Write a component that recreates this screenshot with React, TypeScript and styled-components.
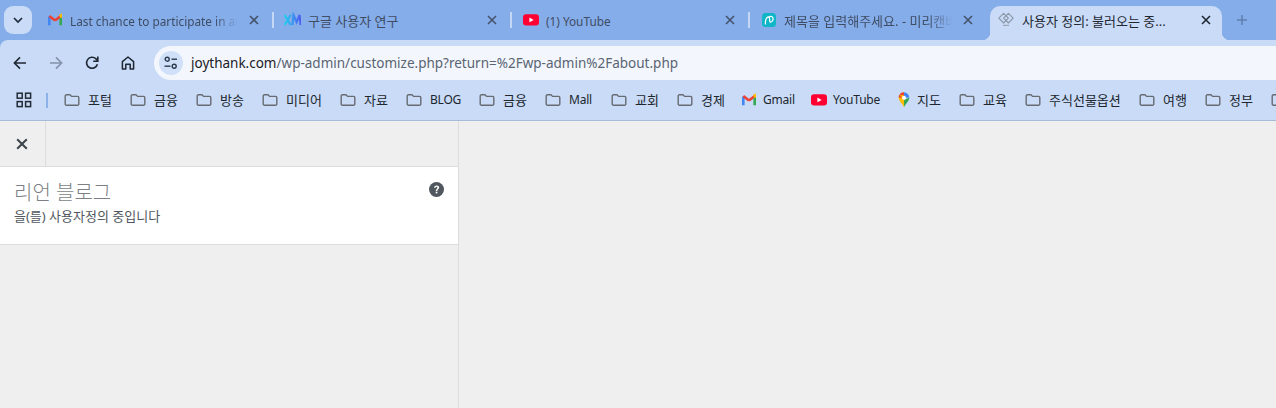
import React from "react";
import styled, { createGlobalStyle } from "styled-components";

const FONT = `"Noto Sans", "Noto Sans CJK KR", sans-serif`;

const GlobalStyle = createGlobalStyle`
  html, body { margin: 0; padding: 0; height: 100%; background: #efefef; overflow: hidden; }
  body { font-family: ${FONT}; }
  #root { height: 100%; }
`;

function GmailIcon({ size = 14 }: { size?: number }) {
  return (
    <svg width={size} height={size} viewBox="0 0 16 16" fill="none">
      <path d="M1.5 14V4.2" stroke="#4285f4" strokeWidth="3" />
      <path d="M14.5 14V4.2" stroke="#34a853" strokeWidth="3" />
      <path d="M1.5 3.5L8 8.6" stroke="#ea4335" strokeWidth="3" />
      <path d="M8 8.6L14.5 3.5" stroke="#ea4335" strokeWidth="3" />
      <path d="M13 3.2L15 2.4V5.5" stroke="#fbbc04" strokeWidth="2.4" />
    </svg>
  );
}

function YoutubeIcon() {
  return (
    <svg width="16" height="16" viewBox="0 0 16 16">
      <rect x="0" y="2.2" width="16" height="11.4" rx="3" fill="#ff0033" />
      <path d="M6.4 5.6L10.6 7.9L6.4 10.2Z" fill="#fff" />
    </svg>
  );
}

function XmIcon() {
  return (
    <XmSvg width="17" height="16" viewBox="0 0 17 16" fill="none">
      <defs>
        <linearGradient id="xm" x1="0" x2="1" y1="0" y2="0">
          <stop offset="0" stopColor="#22d0ee" />
          <stop offset="1" stopColor="#4f5cf0" />
        </linearGradient>
      </defs>
      <path d="M0.6 3L6.6 13M6.6 3L0.6 13M8.4 13L9.4 3L12.6 10L15.6 3L16.6 13" stroke="url(#xm)" strokeWidth="2.2" />
    </XmSvg>
  );
}

function CanvasIcon() {
  return (
    <svg width="14" height="16" viewBox="0 0 14 16" fill="none">
      <rect x="0" y="1" width="14" height="14" rx="3.5" fill="#10b6c6" />
      <path d="M3.4 12C3 8 4.8 4.6 6.8 5C8.4 5.4 7 10.4 8.6 10.2C10.4 10 11.6 7.6 10.9 5.6C10.2 3.8 7.8 4 6.6 5.4" stroke="#fff" strokeWidth="1.2" strokeLinecap="round" />
    </svg>
  );
}

function DiamondIcon() {
  return (
    <svg width="16" height="16" viewBox="0 0 16 16" fill="none">
      <path d="M5.6 1.4L10.4 6.2L5.6 11L0.8 6.2Z" stroke="#8b97a8" strokeWidth="1.1" strokeLinejoin="round" />
      <path d="M10.4 1.4L15.2 6.2L10.4 11L5.6 6.2Z" stroke="#8b97a8" strokeWidth="1.1" strokeLinejoin="round" />
      <path d="M5 13.4H11" stroke="#9aa6b8" strokeWidth="1.2" />
    </svg>
  );
}

function MapsIcon() {
  return (
    <svg width="14" height="16" viewBox="0 0 14 18">
      <path d="M7 17.5C6 14 1 10.5 1 6.3A6 6 0 0 1 7 .4V17.5Z" fill="#fbbc04" />
      <path d="M7 17.5C8 14 13 10.5 13 6.3L7 9Z" fill="#34a853" />
      <path d="M1.8 3.2A6 6 0 0 1 7 .4L7 4Z" fill="#ea4335" />
      <path d="M7 .4A6 6 0 0 1 13 6.3L9 6.5L7 4Z" fill="#4285f4" />
      <path d="M1 6.3A6 6 0 0 1 1.8 3.2L5 6.6Z" fill="#ea4335" />
      <circle cx="7" cy="6.4" r="2.2" fill="#fff" />
    </svg>
  );
}

function FolderIcon() {
  return (
    <svg width="16" height="16" viewBox="0 0 16 16" fill="none">
      <path
        d="M1.2 4A1.2 1.2 0 0 1 2.4 2.8H6L7.6 4.4H13.6A1.2 1.2 0 0 1 14.8 5.6V12A1.2 1.2 0 0 1 13.6 13.2H2.4A1.2 1.2 0 0 1 1.2 12Z"
        stroke="#676b72"
        strokeWidth="1.4"
      />
    </svg>
  );
}

function CloseIcon({ color = "#44505f" }: { color?: string }) {
  return (
    <CloseSvg width="10" height="10" viewBox="0 0 10 10" fill="none">
      <path d="M1 1L9 9M9 1L1 9" stroke={color} strokeWidth="1.6" />
    </CloseSvg>
  );
}

const KO = 13;
const EN = 11.8;

const tabs = [
  { title: "Last chance to participate in an exclusive", icon: <GmailIcon />, fade: true, size: EN },
  { title: "구글 사용자 연구", icon: <XmIcon />, fade: false, size: KO },
  { title: "(1) YouTube", icon: <YoutubeIcon />, fade: false, size: EN },
  { title: "제목을 입력해주세요. - 미리캔버스", icon: <CanvasIcon />, fade: true, size: KO },
];

const bookmarks: { label: string; icon?: React.ReactNode; gap?: number; width: number; latin?: boolean }[] = [
  { label: "포털", width: 26 },
  { label: "금융", width: 26 },
  { label: "방송", width: 26 },
  { label: "미디어", width: 38 },
  { label: "자료", width: 26 },
  { label: "BLOG", width: 33, latin: true },
  { label: "금융", width: 26 },
  { label: "Mall", width: 26, latin: true },
  { label: "교회", width: 26 },
  { label: "경제", width: 25 },
  { label: "Gmail", icon: <GmailIcon />, gap: 7, width: 32, latin: true },
  { label: "YouTube", icon: <YoutubeIcon />, gap: 6, width: 48, latin: true },
  { label: "지도", icon: <MapsIcon />, gap: 6, width: 26 },
  { label: "교육", width: 26 },
  { label: "주식선물옵션", width: 74 },
  { label: "여행", width: 26 },
  { label: "정부", width: 26 },
  { label: "", width: 0 },
];

export default function App() {
  return (
    <>
      <GlobalStyle />
      <Page>
        <TabStrip>
          <SearchTabs>
            <svg width="10" height="7" viewBox="0 0 10 7" fill="none">
              <path d="M1 1L5 5L9 1" stroke="#1f2a3a" strokeWidth="1.7" />
            </svg>
          </SearchTabs>
          {tabs.map((tab, i) => (
            <React.Fragment key={tab.title}>
              <Tab>
                <Favicon>{tab.icon}</Favicon>
                <TabTitle $fade={tab.fade} $size={tab.size}>{tab.title}</TabTitle>
                <CloseIcon color="#45536a" />
              </Tab>
              {i < tabs.length - 1 && <TabDivider />}
            </React.Fragment>
          ))}
          <ActiveTab>
            <Favicon>
              <DiamondIcon />
            </Favicon>
            <ActiveTitle>사용자 정의: 불러오는 중...</ActiveTitle>
            <CloseIcon color="#1f2733" />
          </ActiveTab>
          <NewTab>
            <svg width="12" height="12" viewBox="0 0 12 12" fill="none">
              <path d="M6 1V11M1 6H11" stroke="#5f7fb0" strokeWidth="1.5" />
            </svg>
          </NewTab>
        </TabStrip>

        <Toolbar>
          <NavButton>
            <svg width="16" height="16" viewBox="0 0 16 16" fill="none">
              <path d="M14 8H2.6M8 2.4L2.4 8L8 13.6" stroke="#1f2733" strokeWidth="1.6" />
            </svg>
          </NavButton>
          <NavButton>
            <svg width="16" height="16" viewBox="0 0 16 16" fill="none">
              <path d="M2 8H13.4M8 2.4L13.6 8L8 13.6" stroke="#8292aa" strokeWidth="1.6" />
            </svg>
          </NavButton>
          <NavButton>
            <svg width="16" height="16" viewBox="0 0 16 16" fill="none">
              <path d="M13.4 9.2A5.5 5.5 0 1 1 12 3.9L13.6 5.6" stroke="#1f2733" strokeWidth="1.6" />
              <path d="M13.8 1.6V6.2H9.2" stroke="#1f2733" strokeWidth="1.6" />
            </svg>
          </NavButton>
          <NavButton>
            <svg width="16" height="16" viewBox="0 0 16 16" fill="none">
              <path d="M2.4 14V6.6L8 2L13.6 6.6V14H10.2V9.2H5.8V14Z" stroke="#1f2733" strokeWidth="1.5" strokeLinejoin="round" />
            </svg>
          </NavButton>
          <Omnibox>
            <SiteInfo>
              <svg width="14" height="14" viewBox="0 0 14 14" fill="none">
                <path d="M0.5 10.2H6.5" stroke="#2c3a4e" strokeWidth="1.4" />
                <circle cx="10.2" cy="10.2" r="2" stroke="#2c3a4e" strokeWidth="1.4" />
                <circle cx="3.2" cy="3.2" r="2" stroke="#2c3a4e" strokeWidth="1.4" fill="#cfe0f8" />
                <path d="M7.5 3.2H13" stroke="#2c3a4e" strokeWidth="1.4" />
              </svg>
            </SiteInfo>
            <Url>
              <Host>joythank.com</Host>/wp-admin/customize.php?return=%2Fwp-admin%2Fabout.php
            </Url>
          </Omnibox>
        </Toolbar>

        <BookmarkBar>
          <AppsButton>
            <svg width="16" height="16" viewBox="0 0 16 16" fill="none" stroke="#222a36" strokeWidth="1.5">
              <rect x="1.2" y="1.2" width="5" height="5" />
              <rect x="9.6" y="1.2" width="5" height="5" />
              <rect x="1.2" y="9.6" width="5" height="5" />
              <rect x="9.6" y="9.6" width="5" height="5" />
            </svg>
          </AppsButton>
          <BarDivider />
          <BookmarkList>
            {bookmarks.map((b, i) => (
              <Bookmark key={i} $gap={b.gap ?? 8}>
                {b.icon ?? <FolderIcon />}
                <BookmarkLabel $width={b.width} $latin={!!b.latin}>{b.label}</BookmarkLabel>
              </Bookmark>
            ))}
          </BookmarkList>
        </BookmarkBar>

        <Content>
          <Sidebar>
            <SidebarHeader>
              <CustomizeClose>
                <svg width="12" height="12" viewBox="0 0 12 12" fill="none">
                  <path d="M1.2 1.2L10.8 10.8M10.8 1.2L1.2 10.8" stroke="#3c434a" strokeWidth="2" />
                </svg>
              </CustomizeClose>
            </SidebarHeader>
            <InfoPanel>
              <InfoText>
                <SiteTitle>리언 블로그</SiteTitle>
                <Action>을(를) 사용자정의 중입니다</Action>
              </InfoText>
              <HelpIcon>
                <svg width="15" height="15" viewBox="0 0 15 15">
                  <circle cx="7.5" cy="7.5" r="7.5" fill="#50575e" />
                  <path d="M5 5.8C5 4.3 6.1 3.4 7.6 3.4C9.1 3.4 10.2 4.2 10.2 5.6C10.2 7.2 8.3 7.3 8.3 8.9H6.8C6.8 6.8 8.4 6.8 8.4 5.7C8.4 5.1 8 4.8 7.5 4.8C6.9 4.8 6.6 5.2 6.6 5.8Z" fill="#fff" />
                  <rect x="6.7" y="9.7" width="1.7" height="1.7" fill="#fff" />
                </svg>
              </HelpIcon>
            </InfoPanel>
          </Sidebar>
        </Content>
      </Page>
    </>
  );
}

const XmSvg = styled.svg`
  flex: none;
  margin: -1px 0 0 -1px;
`;

const CloseSvg = styled.svg`
  flex: none;
`;

const Page = styled.div`
  display: flex;
  flex-direction: column;
  height: 408px;
  width: 1276px;
  overflow: hidden;
  background: #85adea;
`;

const TabStrip = styled.div`
  display: flex;
  align-items: stretch;
  height: 40px;
  padding-left: 4px;
  flex: none;
`;

const SearchTabs = styled.div`
  display: flex;
  align-items: center;
  justify-content: center;
  width: 28px;
  height: 28px;
  margin: 6px 4px 0 0;
  border-radius: 9px;
  background: #c9dbf6;
`;

const Tab = styled.div`
  display: flex;
  align-items: center;
  width: 236px;
  padding: 0 13px 0 11px;
  box-sizing: border-box;
  color: #3f4c63;
`;

const TabDivider = styled.div`
  align-self: center;
  width: 2px;
  height: 16px;
  background: #c5d7f5;
`;

const Favicon = styled.div`
  display: flex;
  align-items: center;
  justify-content: center;
  flex: none;
  width: 16px;
  height: 16px;
  margin-right: 7px;
`;

const TabTitle = styled.div<{ $fade: boolean; $size: number }>`
  flex: 1;
  min-width: 0;
  margin: 1px 11px 0 0;
  font-size: ${(p) => p.$size}px;
  white-space: nowrap;
  overflow: hidden;
  line-height: 18px;
  mask-image: ${(p) => (p.$fade ? "linear-gradient(to right, #000 86%, transparent 100%)" : "none")};
`;

const ActiveTab = styled.div`
  position: relative;
  display: flex;
  align-items: center;
  width: 232px;
  margin: 6px 0 0 4px;
  padding: 0 11px 6px 8px;
  box-sizing: border-box;
  border-radius: 10px 10px 0 0;
  background: #c9dbf6;
  color: #1f2733;

  &::before,
  &::after {
    content: "";
    position: absolute;
    bottom: 0;
    width: 8px;
    height: 8px;
  }
  &::before {
    left: -8px;
    background: radial-gradient(circle at 0 0, transparent 8px, #c9dbf6 8.5px);
  }
  &::after {
    right: -8px;
    background: radial-gradient(circle at 100% 0, transparent 8px, #c9dbf6 8.5px);
  }
`;

const ActiveTitle = styled.div`
  flex: 1;
  min-width: 0;
  margin: 1px 0 0 1px;
  font-size: 13px;
  white-space: nowrap;
  overflow: hidden;
  line-height: 18px;
`;

const NewTab = styled.div`
  display: flex;
  align-items: center;
  justify-content: center;
  width: 40px;
`;

const Toolbar = styled.div`
  display: flex;
  align-items: flex-end;
  flex: none;
  height: 40px;
  box-sizing: border-box;
  padding-left: 2px;
  background: #c9dbf6;
  border-radius: 8px 0 0 0;
`;

const NavButton = styled.div`
  display: flex;
  align-items: center;
  justify-content: center;
  width: 36px;
  height: 34px;
`;

const Omnibox = styled.div`
  display: flex;
  align-items: center;
  flex: 1;
  height: 34px;
  margin-left: 8px;
  padding-left: 5px;
  border-radius: 17px 0 0 17px;
  background: #f3f7fd;
`;

const SiteInfo = styled.div`
  display: flex;
  align-items: center;
  justify-content: center;
  width: 24px;
  height: 24px;
  margin-right: 8px;
  border-radius: 50%;
  background: #cfe0f8;
`;

const Url = styled.div`
  color: #5a6472;
  font-size: 13.5px;
  line-height: 20px;
  white-space: nowrap;
`;

const Host = styled.span`
  color: #1b2026;
`;

const BookmarkBar = styled.div`
  display: flex;
  align-items: center;
  flex: none;
  height: 41px;
  box-sizing: border-box;
  background: #c9dbf6;
  border-bottom: 1px solid #a9bad8;
  overflow: hidden;
`;

const AppsButton = styled.div`
  display: flex;
  align-items: center;
  justify-content: center;
  width: 16px;
  margin-left: 16px;
`;

const BarDivider = styled.div`
  flex: none;
  width: 2px;
  height: 15px;
  margin: 0 16px 0 14px;
  background: #8db2ea;
`;

const BookmarkList = styled.div`
  display: flex;
  align-items: center;
  gap: 16px;
`;

const Bookmark = styled.div<{ $gap: number }>`
  display: flex;
  align-items: center;
  gap: ${(p) => p.$gap}px;
  flex: none;
`;

const BookmarkLabel = styled.span<{ $width: number; $latin: boolean }>`
  width: ${(p) => p.$width}px;
  color: #20262e;
  font-size: ${(p) => (p.$latin ? 12 : KO)}px;
  letter-spacing: ${(p) => (p.$latin ? "-0.2px" : "0")};
  line-height: 16px;
  white-space: nowrap;
`;

const Content = styled.div`
  display: flex;
  flex: 1;
  min-height: 0;
  background: #efefef;
`;

const Sidebar = styled.div`
  display: flex;
  flex-direction: column;
  width: 459px;
  box-sizing: border-box;
  border-right: 1px solid #dddddd;
`;

const SidebarHeader = styled.div`
  display: flex;
  flex: none;
  height: 46px;
  box-sizing: border-box;
  border-bottom: 1px solid #dddddd;
`;

const CustomizeClose = styled.div`
  display: flex;
  align-items: center;
  justify-content: center;
  width: 46px;
  padding-right: 1px;
  box-sizing: border-box;
  border-right: 1px solid #dddddd;
`;

const InfoPanel = styled.div`
  display: flex;
  justify-content: space-between;
  flex: none;
  height: 78px;
  box-sizing: border-box;
  padding: 13px 14px 0 14px;
  background: #ffffff;
  border-bottom: 1px solid #dddddd;
`;

const InfoText = styled.div`
  display: flex;
  flex-direction: column;
`;

const SiteTitle = styled.div`
  color: #7c7f84;
  font-size: 20px;
  font-weight: 300;
  line-height: 26px;
`;

const Action = styled.div`
  margin-top: 2px;
  color: #50575e;
  font-size: 13px;
  line-height: 16px;
`;

const HelpIcon = styled.div`
  display: flex;
  margin-top: 2px;
`;
